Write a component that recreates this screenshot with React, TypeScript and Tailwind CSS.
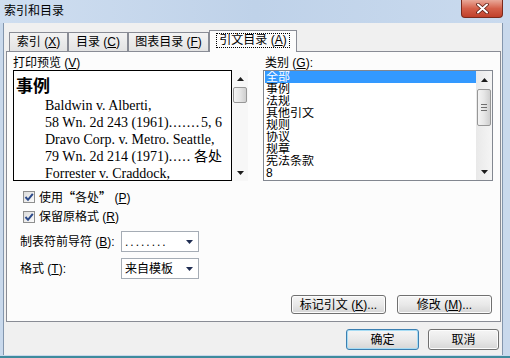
import React from "react";

const U = ({ c }: { c: string }) => <span className="underline underline-offset-[1px]">{c}</span>;

const Arrow = ({ up }: { up?: boolean }) => (
  <svg width="7" height="4" viewBox="0 0 7 4">
    <polygon points={up ? "0,4 7,4 3.5,0" : "0,0 7,0 3.5,4"} fill="#1c1c1c" />
  </svg>
);

const NavyArrow = () => (
  <svg width="7" height="4" viewBox="0 0 7 4">
    <polygon points="0,0 7,0 3.5,4" fill="#1f2d52" />
  </svg>
);

const Scrollbar = ({ thumbMt, thumbH, track, grip }: { thumbMt: string; thumbH: string; track: string; grip?: boolean }) => (
  <div className={`flex h-full w-[16px] flex-col ${track}`}>
    <div className="flex h-[17px] items-center justify-center">
      <Arrow up />
    </div>
    <div className="flex-1">
      <div
        className={`${thumbMt} ${thumbH} mx-[1px] flex flex-col items-center justify-center gap-[2px] rounded-[2px] border border-[#979797] bg-gradient-to-r from-[#f4f4f4] via-[#e6e6e6] to-[#cfcfcf]`}
      >
        {grip && (
          <>
            <div className="h-px w-[6px] bg-[#6e6e6e]" />
            <div className="h-px w-[6px] bg-[#6e6e6e]" />
            <div className="h-px w-[6px] bg-[#6e6e6e]" />
          </>
        )}
      </div>
    </div>
    <div className="flex h-[17px] items-center justify-center">
      <Arrow />
    </div>
  </div>
);

const Checkbox = ({ children }: { children: React.ReactNode }) => (
  <div className="flex h-[16px] items-center gap-[4px] pl-[10px]">
    <div className="flex h-[12px] w-[12px] items-center justify-center border border-[#8e8f8f] bg-gradient-to-br from-[#dcdcdc] to-[#fbfbfb]">
      <svg width="10" height="10" viewBox="0 0 10 10">
        <path d="M1.5 5 L4 7.8 L8.8 1.8" stroke="#2c4a8a" strokeWidth="2" fill="none" />
      </svg>
    </div>
    <span className="leading-[14px]">{children}</span>
  </div>
);

const Select = ({ value, dots }: { value: string; dots?: boolean }) => (
  <div className="flex h-[21px] w-[78px] items-center justify-between border border-[#a5acb5] bg-white pl-[3px] pr-[5px]">
    <span className={`leading-[14px] ${dots ? "tracking-[2px]" : ""}`}>{value}</span>
    <NavyArrow />
  </div>
);

const Btn = ({ children, w, focus }: { children: React.ReactNode; w: string; focus?: boolean }) => (
  <div
    className={`flex ${w} items-center justify-center rounded-[3px] border bg-gradient-to-b from-[#f5f5f5] via-[#e9e9e9] to-[#d6d6d6] ${
      focus ? "border-[#3c7fb1] shadow-[inset_0_0_0_1px_#a6dcf4]" : "border-[#707070] shadow-[inset_0_0_0_1px_#fcfcfc]"
    }`}
  >
    {children}
  </div>
);

const Leader = ({ left, dots, right }: { left: string; dots: string; right: string }) => (
  <div className="flex justify-between pr-[9px] whitespace-nowrap">
    <span>
      {left}
      <span className="tracking-[1px]">{dots}</span>
    </span>
    <span>{right}</span>
  </div>
);

const categories = ["全部", "事例", "法规", "其他引文", "规则", "协议", "规章", "宪法条款", "8"];

export default function App() {
  return (
    <div className="flex h-[358px] w-[510px] flex-col overflow-hidden border-b-2 border-[#3f8b9d] bg-[#c9d9ec] font-['Liberation_Sans','Noto_Sans_CJK_SC',sans-serif] text-[12px] text-black">
      {/* title bar */}
      <div className="flex h-[23px] shrink-0 items-start justify-between bg-gradient-to-r from-[#cfdef0] via-[#bfd2e9] to-[#c9daee] pl-[4px]">
        <span className="mt-[4px] leading-[14px]">索引和目录</span>
        <div className="mr-[7px] flex h-[18px] w-[42px] items-center justify-center rounded-b-[4px] border border-t-0 border-[#7b2a1c] bg-gradient-to-b from-[#e8a899] via-[#d4604a] to-[#c0402a]">
          <svg width="13" height="11" viewBox="0 0 13 11">
            <path d="M2 1.5 L11 9.5 M11 1.5 L2 9.5" stroke="#5a1a10" strokeWidth="3.6" strokeLinecap="round" />
            <path d="M2 1.5 L11 9.5 M11 1.5 L2 9.5" stroke="#ffffff" strokeWidth="2" strokeLinecap="round" />
          </svg>
        </div>
      </div>

      {/* dialog body */}
      <div className="mb-px ml-[3px] mr-[7px] flex flex-1 flex-col border-l border-r border-[#8396ad] bg-[#f0f0f0] pl-[2px] pr-px pt-[7px]">
        {/* tabs */}
        <div className="flex h-[21px] items-end pl-[3px]">
          <div className="flex h-[19px] w-[59px] items-center justify-center border border-b-0 border-[#898c95] bg-gradient-to-b from-[#f3f3f3] to-[#e3e3e3]">
            索引 (<U c="X" />)
          </div>
          <div className="flex h-[19px] w-[60px] items-center justify-center border border-b-0 border-[#898c95] bg-gradient-to-b from-[#f3f3f3] to-[#e3e3e3]">
            目录 (<U c="C" />)
          </div>
          <div className="flex h-[19px] w-[81px] items-center justify-center border border-b-0 border-[#898c95] bg-gradient-to-b from-[#f3f3f3] to-[#e3e3e3]">
            图表目录 (<U c="F" />)
          </div>
          <div className="relative z-10 -mb-px flex h-[22px] w-[88px] justify-center border border-b-0 border-[#898c95] bg-[#fcfcfc] pt-[2px]">
            <span className="h-[15px] border border-dotted border-black px-[2px] leading-[13px]">
              引文目录 (<U c="A" />)
            </span>
          </div>
        </div>

        {/* tab panel */}
        <div className="flex h-[271px] flex-col border border-[#898c95] bg-[#fcfcfc] pl-[6px] pt-[4px]">
          <div className="flex">
            {/* preview */}
            <div className="flex w-[235px] flex-col">
              <div className="h-[14px] leading-[14px]">
                打印预览 (<U c="V" />)
              </div>
              <div className="flex h-[111px]">
                <div className="w-[220px] overflow-hidden border border-black bg-white pl-[2px] pt-[6px]">
                  <div className="text-[17px] font-bold leading-[20px]">事例</div>
                  <div className="pl-[29px] font-['Liberation_Serif','Noto_Sans_CJK_SC',serif] text-[14px] leading-[17px]">
                    <div>Baldwin v. Alberti,</div>
                    <Leader left="58 Wn. 2d 243 (1961)" dots="......." right="5, 6" />
                    <div>Dravo Corp. v. Metro. Seattle,</div>
                    <Leader left="79 Wn. 2d 214 (1971)" dots="....." right="各处" />
                    <div>Forrester v. Craddock,</div>
                  </div>
                </div>
                <Scrollbar thumbMt="mt-0" thumbH="h-[16px]" track="bg-[#f7f7f7]" />
              </div>
            </div>

            {/* categories */}
            <div className="ml-[15px] flex w-[230px] flex-col">
              <div className="h-[14px] pl-[2px] leading-[14px]">
                类别 (<U c="G" />):
              </div>
              <div className="flex h-[111px] border border-[#828790] bg-white">
                <div className="flex-1 pl-px">
                  {categories.map((c, i) => (
                    <div
                      key={c}
                      className={`h-[12px] overflow-hidden pl-px leading-[12px] ${i === 0 ? "bg-[#3399ff] text-white" : ""}`}
                    >
                      {c}
                    </div>
                  ))}
                </div>
                <Scrollbar thumbMt="mt-px" thumbH="h-[37px]" track="bg-gradient-to-r from-[#e9e9e9] to-[#f5f5f5]" grip />
              </div>
            </div>
          </div>

          {/* checkboxes */}
          <div className="mt-[8px] flex flex-col gap-[4px]">
            <Checkbox>
              使用<span className="font-['Noto_Sans_CJK_SC',sans-serif] font-bold">“</span>各处
              <span className="font-['Noto_Sans_CJK_SC',sans-serif] font-bold">”</span> (<U c="P" />)
            </Checkbox>
            <Checkbox>
              保留原格式 (<U c="R" />)
            </Checkbox>
          </div>

          {/* selects */}
          <div className="mt-[6px] flex items-center pl-[7px]">
            <span className="w-[101px]">
              制表符前导符 (<U c="B" />):
            </span>
            <Select value="........" dots />
          </div>
          <div className="mt-[6px] flex items-center pl-[7px]">
            <span className="w-[101px]">
              格式 (<U c="T" />):
            </span>
            <Select value="来自模板" />
          </div>

          {/* panel buttons */}
          <div className="mt-[16px] flex justify-end gap-[11px] pr-[8px]">
            <Btn w="h-[19px] w-[95px]">
              标记引文 (<U c="K" />)...
            </Btn>
            <Btn w="h-[19px] w-[95px]">
              修改 (<U c="M" />)...
            </Btn>
          </div>
        </div>

        {/* dialog buttons */}
        <div className="mt-[7px] flex justify-end gap-[9px] pr-[2px]">
          <Btn w="h-[21px] w-[73px]" focus>
            确定
          </Btn>
          <Btn w="h-[21px] w-[71px]">取消</Btn>
        </div>
      </div>
    </div>
  );
}
